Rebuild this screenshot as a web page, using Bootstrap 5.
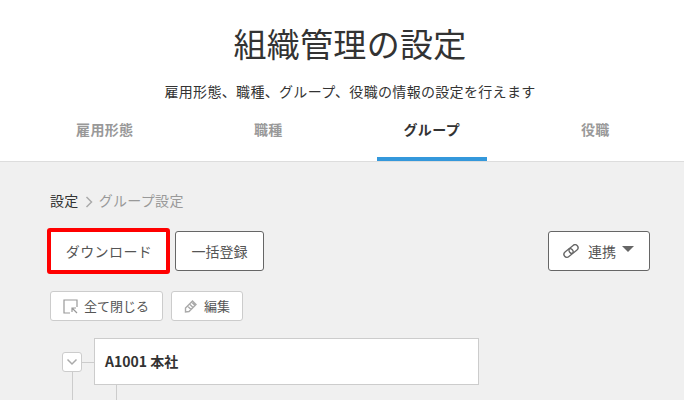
<!DOCTYPE html>
<html lang="ja">
<head>
<meta charset="utf-8">
<link href="https://cdn.jsdelivr.net/npm/bootstrap@5.3.0/dist/css/bootstrap.min.css" rel="stylesheet">
<style>
html,body{height:400px;overflow:hidden}
body{font-family:"Noto Sans CJK JP","Noto Sans",sans-serif;color:#333;background:#f0f0f0;letter-spacing:.02em}
.hd{background:#fff;height:162px;border-bottom:1px solid #ddd;padding:20px 0 0 16px}
.ttl{font-size:33px;line-height:46px;font-weight:400;margin:0;color:#333;letter-spacing:.3px}
.sub{font-size:14px;line-height:20px;margin:15px 0 0;color:#333}
.tabs{margin:12px 0 0 7px;width:654px}
.tb{flex:1 1 0;height:48px;padding-top:3px}
.tb a{display:block;width:110px;height:45px;margin:0 auto;line-height:26px;font-size:14px;font-weight:700;color:#999;text-align:center;border-bottom:4px solid transparent;text-decoration:none}
.tb a.on{color:#333;border-bottom-color:#3498db}
.main{padding:29px 34px 0 50px}
.crumb{font-size:14px;line-height:19px;color:#333}
.crumb span{color:#999}
.crumb svg{margin:0 6px 0 6px}
.bar{margin-top:21px}
.b1{height:40px;background:#fff;border:1px solid #666;border-radius:3px;font-size:14px;color:#555;padding:0;display:flex;align-items:center;justify-content:center}
.b1:hover{background:#fff;color:#555;border-color:#666}
.dl{width:123px;height:46px;margin:-3px 0 0 -3px;border:4px solid #f00;border-radius:3px;letter-spacing:.03em;padding-left:1px}
.dl:hover{border-color:#f00}
.one{width:89px;margin-left:5px}
.lnk{width:102px;gap:7px;padding-left:1px}
.lnk svg{margin:0 1px 0 -3px}
.car{width:0;height:0;border-left:6px solid transparent;border-right:6px solid transparent;border-top:6px solid #666;margin:-5px 0 0 -1px}
.bar2{margin-top:17px}
.b2{height:30px;background:#fff;border:1px solid #ccc;border-radius:3px;font-size:13px;color:#555;padding:0;display:flex;align-items:center;justify-content:center;gap:6px}
.b2:hover{background:#fff;color:#555;border-color:#ccc}
.w1{width:113px;padding-right:1px}.w2{width:72px}
.tree{margin-top:17px;height:70px}
.tg{width:20px;height:20px;background:#fff;border:1px solid #ccc;border-radius:3px;margin:14px 0 0 12px;flex:none;display:flex;align-items:center;justify-content:center}
.lnh{width:12px;height:1px;background:#ccc;margin-top:24px;flex:none}
.nd{width:385px;height:47px;background:#fff;border:1px solid #ccc;padding-left:10px;line-height:45px;font-size:14px;font-weight:700;color:#333;flex:none;letter-spacing:0}
.v1{position:absolute;left:22px;top:34px;width:1px;height:30px;background:#ccc}
.v2{position:absolute;left:66px;top:47px;width:1px;height:30px;background:#ccc}
</style>
</head>
<body>
<header class="hd text-center">
<h1 class="ttl">組織管理の設定</h1>
<p class="sub">雇用形態、職種、グループ、役職の情報の設定を行えます</p>
<nav class="tabs d-flex">
<div class="tb"><a href="#">雇用形態</a></div>
<div class="tb"><a href="#">職種</a></div>
<div class="tb"><a class="on" href="#">グループ</a></div>
<div class="tb"><a href="#">役職</a></div>
</nav>
</header>
<main class="main">
<div class="crumb">設定<svg width="8" height="12" viewBox="0 0 8 12"><path d="M1.500 1l5 5-5 5" fill="none" stroke="#aaa" stroke-width="1.500"/></svg><span>グループ設定</span></div>
<div class="bar d-flex align-items-start justify-content-between">
<div class="d-flex align-items-start">
<button class="btn b1 dl">ダウンロード</button>
<button class="btn b1 one">一括登録</button>
</div>
<button class="btn b1 lnk"><svg width="18" height="14" viewBox="0 0 18 14" fill="none" stroke="#666" stroke-width="1.300"><rect x="1.500" y="6" width="10" height="6" rx="3" transform="rotate(-40 6.500 9)"/><rect x="6.500" y="2" width="10" height="6" rx="3" transform="rotate(-40 11.500 5)"/></svg><span>連携</span><span class="car"></span></button>
</div>
<div class="bar2 d-flex" style="gap:8px">
<button class="btn b2 w1"><svg width="15" height="15" viewBox="0 0 15 15" fill="none" stroke="#999" stroke-width="1.200"><path d="M7 14H1V1h13v7"/><path d="M14 14L9 9M9 13V9h4"/></svg>全て閉じる</button>
<button class="btn b2 w2"><svg width="14" height="14" viewBox="0 0 14 14" fill="none" stroke="#aaa" stroke-width="1.400"><path d="M1.500 9L8.500 2l3.500 3.500-7 7-3.500.5zM3.500 7l3.500 3.500M5.500 5l3.500 3.500M7.500 3l3.500 3.500"/></svg>編集</button>
</div>
<div class="tree d-flex align-items-start position-relative">
<div class="tg"><svg width="12" height="8" viewBox="0 0 12 8"><path d="M1.500 1.500L6 6l4.500-4.500" fill="none" stroke="#aaa" stroke-width="1.500"/></svg></div>
<div class="lnh"></div>
<div class="nd">A1001 本社</div>
<div class="v1"></div>
<div class="v2"></div>
</div>
</main>
<script src="https://cdn.jsdelivr.net/npm/bootstrap@5.3.0/dist/js/bootstrap.bundle.min.js"></script>
</body>
</html>
